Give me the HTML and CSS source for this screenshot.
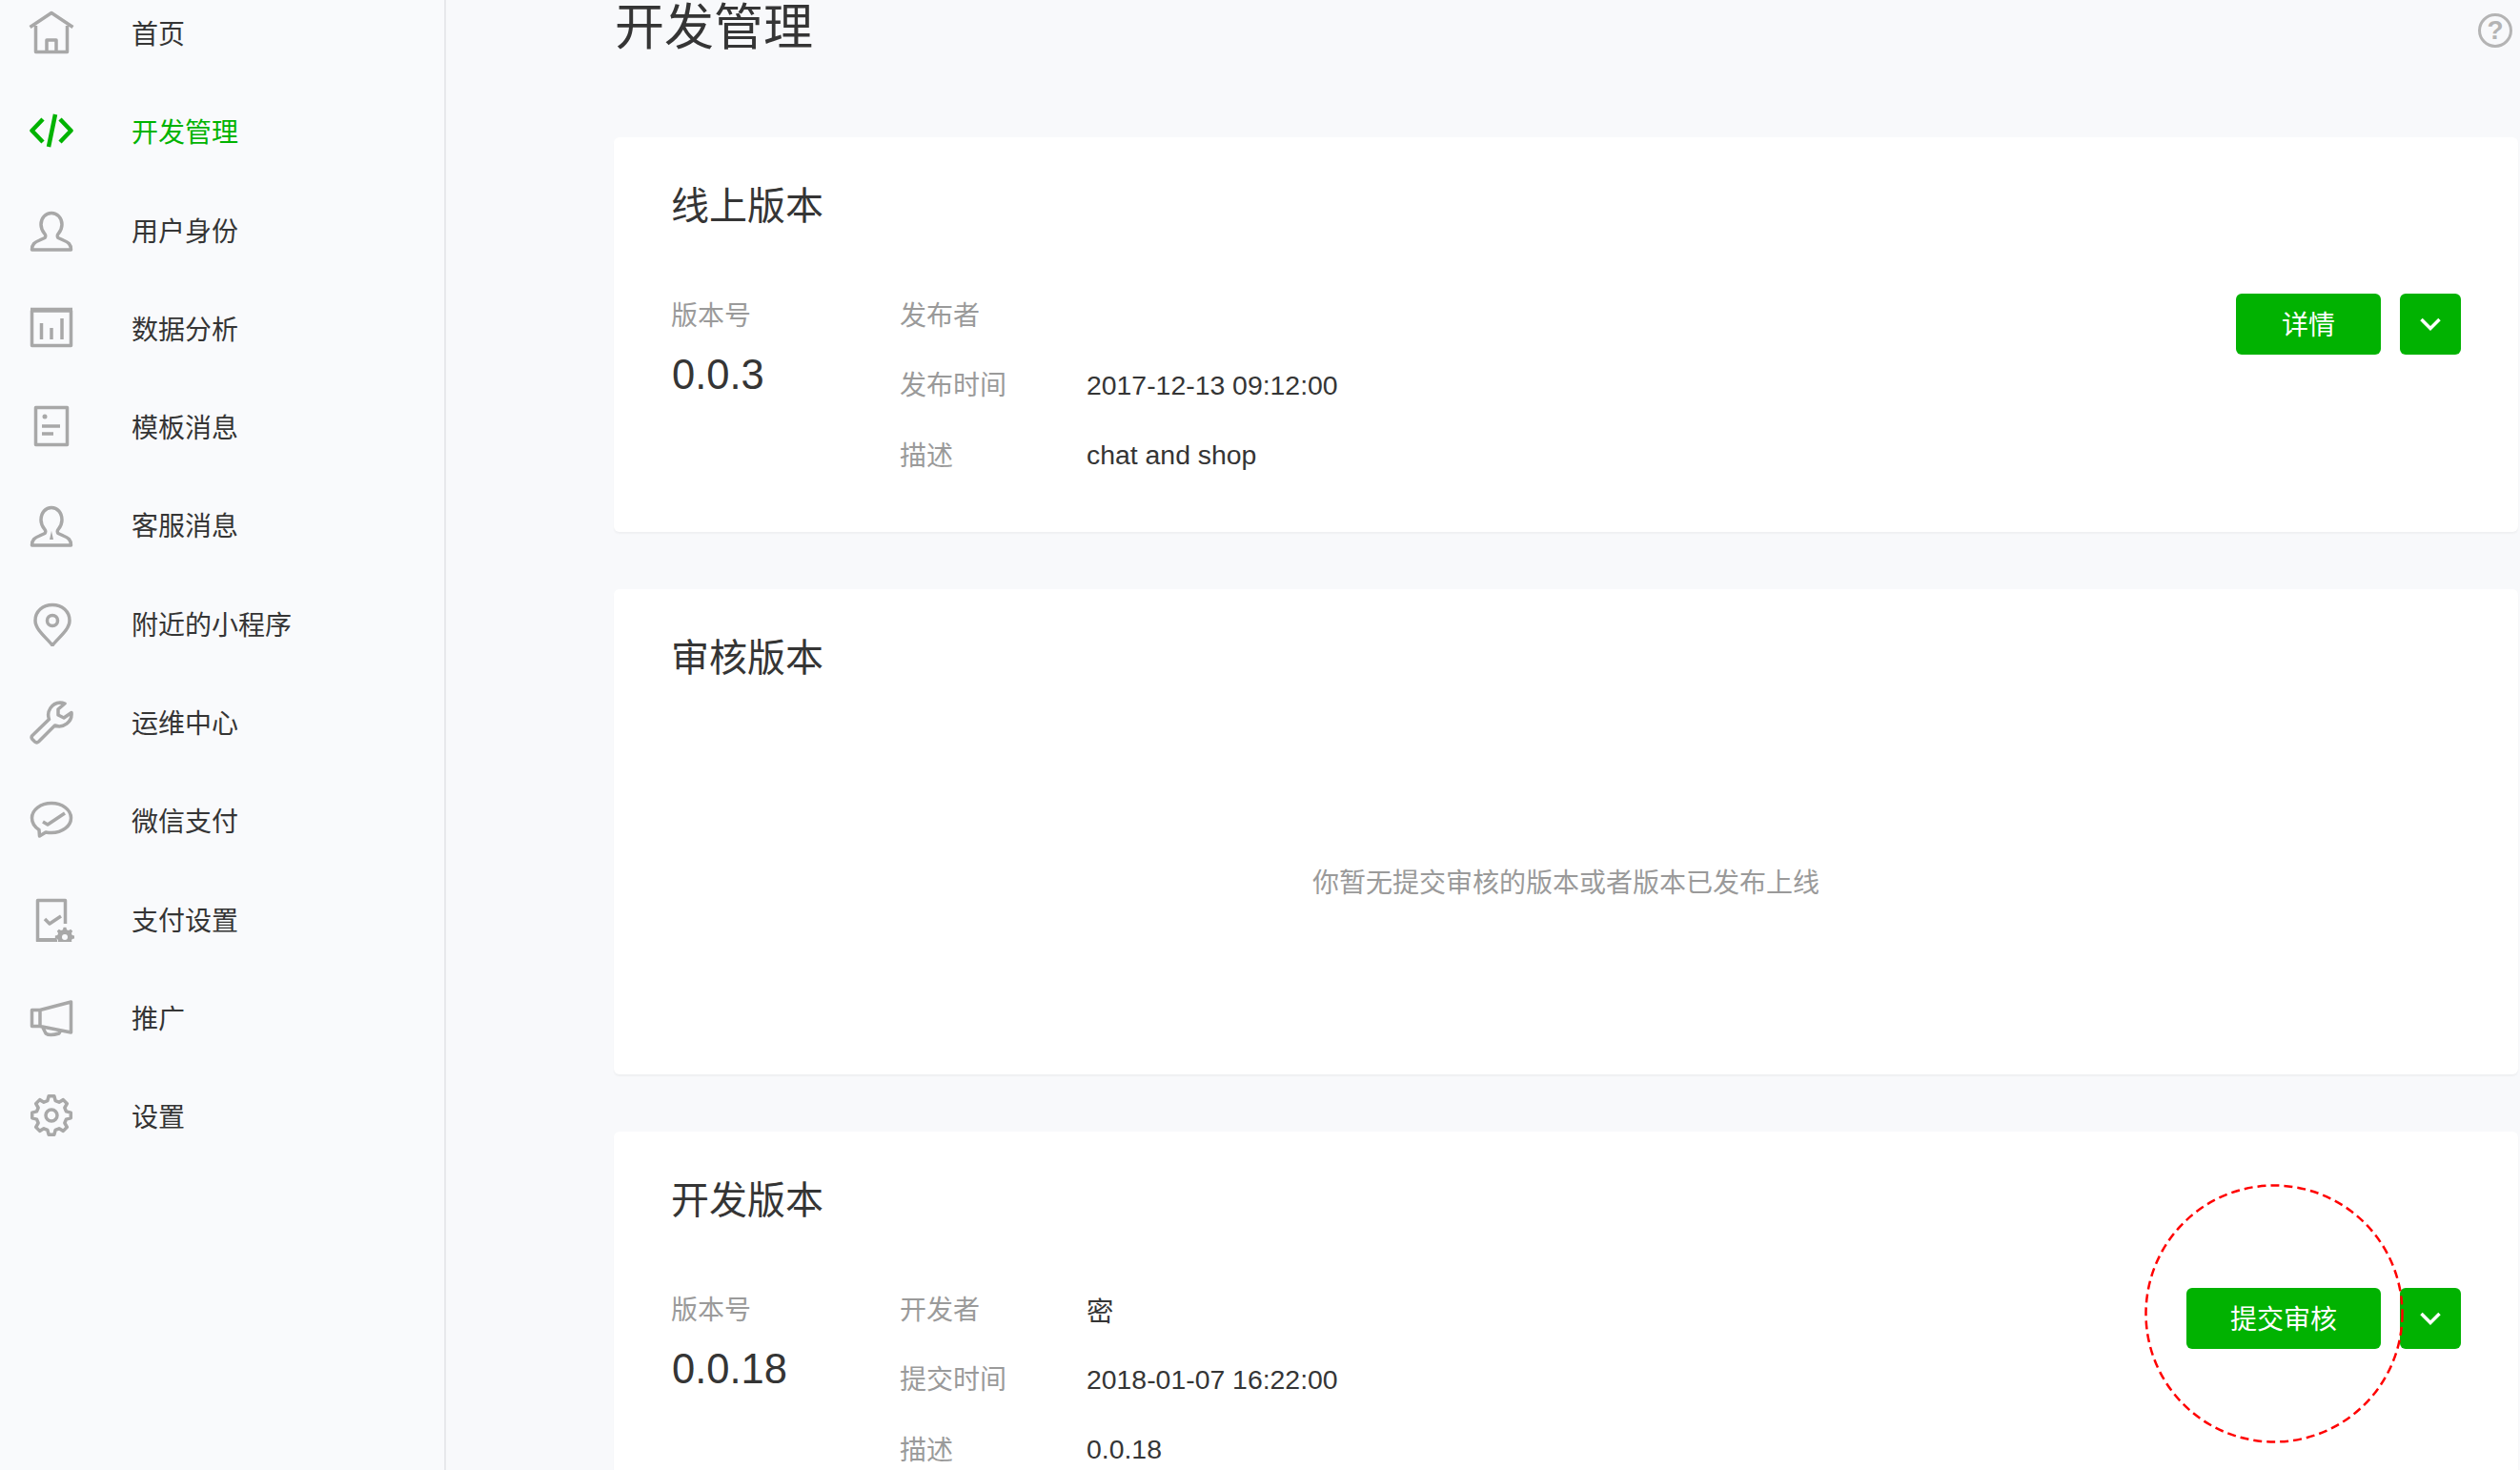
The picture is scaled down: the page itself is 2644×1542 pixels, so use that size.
FILE: index.html
```html
<!DOCTYPE html>
<html lang="zh-CN">
<head>
<meta charset="utf-8">
<title>开发管理</title>
<link rel="stylesheet" href="styles.css">
</head>
<body>
<div class="layout">
  <aside class="sidebar">
    <nav class="nav">
      <a class="nav-item"><svg class="nav-icon" viewBox="0 0 48 48"><path d="M1.500 18.500 24 3.500l22.500 15M7.500 17v27.500h33V17M19 44.500V32h10v12.500"/></svg><span>首页</span></a>
      <a class="nav-item is-active"><svg class="nav-icon" viewBox="0 0 48 48"><path d="M15 12 3.500 24 15 36M33 12l11.500 12L33 36M28 7l-7 34"/></svg><span>开发管理</span></a>
      <a class="nav-item"><svg class="nav-icon" viewBox="0 0 48 48"><path d="M3.500 45c0-6 3-8 8-10l5.500-2.500c1-1 1-3 0-4-2.500-3-4-6-4-10 0-7 5-12 11-12s11 5 11 12c0 4-1.500 7-4 10-1 1-1 3 0 4l5.500 2.500c5 2 8 4 8 10z"/></svg><span>用户身份</span></a>
      <a class="nav-item"><svg class="nav-icon" viewBox="0 0 48 48"><path d="M3.500 6h41v36.500h-41zM13.500 19v17M24 24v12M35 14v22"/><path d="M2 4.500h44"/></svg><span>数据分析</span></a>
      <a class="nav-item"><svg class="nav-icon" viewBox="0 0 48 48"><path d="M7.500 4.500h33v39h-33zM14 24h19M14 32h12"/><circle class="dot" cx="17" cy="14" r="2.500"/></svg><span>模板消息</span></a>
      <a class="nav-item"><svg class="nav-icon" viewBox="0 0 48 48"><path d="M3.500 46c0-6 3-8 8-10l5.500-2.500c1-1 1-3 0-4-2.500-3-4-6-4-10 0-8 5-13 11-13s11 5 11 13c0 4-1.500 7-4 10-1 1-1 3 0 4l5.500 2.500c5 2 8 4 8 10z"/><path class="dot" d="m24 31-2 9h4z"/></svg><span>客服消息</span></a>
      <a class="nav-item"><svg class="nav-icon" viewBox="0 0 48 48"><path d="M25 47C20 40 7 31 7 21 7 11 15 4.500 25 4.500S43 11 43 21C43 31 30 40 25 47Z"/><circle cx="25" cy="21" r="5.500"/></svg><span>附近的小程序</span></a>
      <a class="nav-item"><svg class="nav-icon" viewBox="0 0 48 48"><path d="M33 4a13 13 0 0 0-11.500 17.500L4 38.500a3 3 0 0 0 0 4L6.500 45a3 3 0 0 0 4 0L27.500 28A13 13 0 0 0 45 14.500L37 20l-6-3v-6l7-6a13 13 0 0 0-5-1Z"/></svg><span>运维中心</span></a>
      <a class="nav-item"><svg class="nav-icon" viewBox="0 0 48 48"><path d="M24 6.500C12.500 6.500 3.500 13.500 3.500 22c0 5 3 9.500 7.500 12.500l.5 6.500 6.500-4c2 .4 4 .6 6 .6 11.500 0 20.500-7.100 20.500-15.600S35.500 6.500 24 6.500Z"/><path d="m15 26 5 3 18-12"/></svg><span>微信支付</span></a>
      <a class="nav-item"><svg class="nav-icon" viewBox="0 0 48 48"><path d="M30 47H9.500V4.500h29V29"/><path class="thick" d="M9 46.500h20"/><path d="m17 24 5 5 12-8"/><path class="dot" transform="translate(38 43) scale(.5) translate(-24 -24)" d="M19.860 8.550 21.150 3.700h5.700l1.290 4.850L32 10.140l4.340-2.510 4.030 4.030L37.860 16l1.590 3.860 4.850 1.290v5.700l-4.850 1.290L37.860 32l2.510 4.340-4.030 4.030L32 37.860l-3.860 1.590-1.290 4.850h-5.700l-1.290-4.850L16 37.860l-4.340 2.510-4.030-4.030L10.140 32l-1.590-3.860L3.700 26.850v-5.700l4.850-1.290L10.140 16l-2.510-4.340 4.030-4.030L16 10.140Z"/><circle class="hole" cx="38" cy="43" r="3"/></svg><span>支付设置</span></a>
      <a class="nav-item"><svg class="nav-icon" viewBox="0 0 48 48"><path d="M3.500 16.500H12v17H3.500zM12 16.500 44.500 8v32L12 33.500M15 35l3 6q4 3 14 0l1-2"/></svg><span>推广</span></a>
      <a class="nav-item"><svg class="nav-icon" viewBox="0 0 48 48"><path d="M19.860 8.550 21.150 3.700h5.700l1.290 4.850L32 10.140l4.340-2.510 4.030 4.030L37.860 16l1.590 3.860 4.850 1.290v5.700l-4.850 1.290L37.860 32l2.510 4.340-4.030 4.030L32 37.860l-3.860 1.590-1.290 4.850h-5.700l-1.290-4.850L16 37.860l-4.340 2.510-4.030-4.030L10.140 32l-1.590-3.860L3.700 26.850v-5.700l4.850-1.290L10.140 16l-2.510-4.340 4.030-4.030L16 10.140Z"/><circle cx="24" cy="24" r="6"/></svg><span>设置</span></a>
    </nav>
  </aside>
  <main class="main">
    <header class="page-head">
      <h1 class="page-title">开发管理</h1>
      <span class="help">?</span>
    </header>

    <section class="card">
      <h2 class="card-title">线上版本</h2>
      <div class="card-body">
        <div class="version">
          <div class="label version-label">版本号</div>
          <div class="version-number">0.0.3</div>
        </div>
        <dl class="details">
          <dt class="label">发布者</dt><dd></dd>
          <dt class="label">发布时间</dt><dd>2017-12-13 09:12:00</dd>
          <dt class="label">描述</dt><dd>chat and shop</dd>
        </dl>
        <div class="actions">
          <button class="btn btn-detail">详情</button>
          <button class="btn btn-more"><svg class="chevron" viewBox="0 0 22 14"><path d="M1.500 2 11 11.500 20.500 2"/></svg></button>
        </div>
      </div>
    </section>

    <section class="card card-review">
      <h2 class="card-title">审核版本</h2>
      <p class="empty">你暂无提交审核的版本或者版本已发布上线</p>
    </section>

    <section class="card">
      <h2 class="card-title">开发版本</h2>
      <div class="card-body">
        <div class="version">
          <div class="label version-label">版本号</div>
          <div class="version-number">0.0.18</div>
        </div>
        <dl class="details">
          <dt class="label">开发者</dt><dd>密</dd>
          <dt class="label">提交时间</dt><dd>2018-01-07 16:22:00</dd>
          <dt class="label">描述</dt><dd>0.0.18</dd>
        </dl>
        <div class="actions">
          <button class="btn btn-submit">提交审核</button>
          <button class="btn btn-more"><svg class="chevron" viewBox="0 0 22 14"><path d="M1.500 2 11 11.500 20.500 2"/></svg></button>
          <svg class="highlight" viewBox="0 0 274 274"><circle cx="137" cy="137" r="134.500"/></svg>
        </div>
      </div>
    </section>
  </main>
</div>
</body>
</html>
```
FILE: styles.css
```css
* { box-sizing: border-box; }

html, body {
  margin: 0;
  height: 100%;
  overflow: hidden;
}

body {
  background: #f8f9fb;
  color: #353535;
  font-family: "Liberation Sans", "Noto Sans CJK SC", sans-serif;
  font-size: 28px;
}

.layout {
  display: flex;
  height: 100vh;
}

.sidebar {
  flex: 0 0 468px;
  background: #f9fafc;
  border-right: 2px solid #e7e8eb;
  overflow: hidden;
}

.nav {
  display: flex;
  flex-direction: column;
  margin-top: -17.7px;
}

.nav-item {
  display: flex;
  align-items: center;
  flex: 0 0 103.3px;
  padding-left: 30px;
  gap: 60px;
  color: #353535;
}

.nav-icon {
  flex: 0 0 48px;
  width: 48px;
  height: 48px;
  fill: none;
  stroke: #a8a8a8;
  stroke-width: 3.5;
  stroke-linejoin: round;
  filter: blur(.4px);
}

.nav-icon .dot { fill: #a8a8a8; stroke: none; }
.nav-icon .hole { fill: #f9fafc; stroke: none; }
.nav-icon .thick { stroke-width: 5; }

.is-active { color: #00b300; }
.is-active .nav-icon { stroke: #00b300; stroke-width: 4.5; }

.main {
  flex: 1;
  min-width: 0;
  padding: 0 2px 0 176px;
}

.page-head {
  display: flex;
  justify-content: space-between;
  margin-bottom: 89px;
}

.page-title {
  margin: 0;
  padding: 3px 0 0 1px;
  font-size: 52px;
  font-weight: 400;
  line-height: 52px;
}

.help {
  width: 36px;
  height: 36px;
  margin: 14px 6px 0 0;
  border: 3px solid #b4b4b4;
  border-radius: 50%;
  color: #b4b4b4;
  font-size: 28px;
  font-weight: 700;
  line-height: 30px;
  text-align: center;
}

.card {
  margin-bottom: 60px;
  padding: 44px 60px 44.5px 60px;
  background: #fff;
  border-radius: 6px;
  box-shadow: 0 2px 2px rgba(0, 0, 0, .04);
}

.card-title {
  margin: 0;
  font-size: 40px;
  font-weight: 400;
  line-height: 56px;
}

.card-body {
  display: flex;
  margin-top: 49px;
}

.version { flex: 0 0 240px; }

.label { color: #9a9a9a; }

.version-label {
  padding-top: 2px;
  line-height: 73.5px;
}

.version-number {
  padding-left: 1px;
  font-size: 43.5px;
  line-height: 49px;
}

.details {
  display: grid;
  grid-template-columns: 196px auto;
  grid-auto-rows: 73.5px;
  align-items: center;
  margin: 0;
}

.details dt { padding-bottom: 2px; }

.details dd {
  margin: 0;
  padding-top: 2px;
  font-size: 28.4px;
}

.actions {
  position: relative;
  display: flex;
  gap: 20px;
  margin: 14.75px 0 0 auto;
  align-self: flex-start;
}

.btn {
  height: 64px;
  padding: 0 0 2px;
  border: 0;
  border-radius: 6px;
  background: #01b201;
  color: #fff;
  font: inherit;
}

.btn-detail { width: 152px; }
.btn-submit { width: 204px; }

.btn-more {
  display: flex;
  align-items: center;
  justify-content: center;
  width: 64px;
  padding: 0;
}

.chevron {
  width: 22px;
  height: 14px;
  fill: none;
  stroke: #fff;
  stroke-width: 3.5;
}

.highlight {
  position: absolute;
  top: -109.5px;
  right: 59.5px;
  width: 274px;
  height: 274px;
  fill: none;
  stroke: #f00;
  stroke-width: 2.5;
  stroke-dasharray: 9 5;
}

.card-review { padding-bottom: 0; height: 509px; }

.empty {
  height: 409px;
  margin: 0;
  padding-top: 2px;
  display: flex;
  align-items: center;
  justify-content: center;
  color: #9a9a9a;
}
```
